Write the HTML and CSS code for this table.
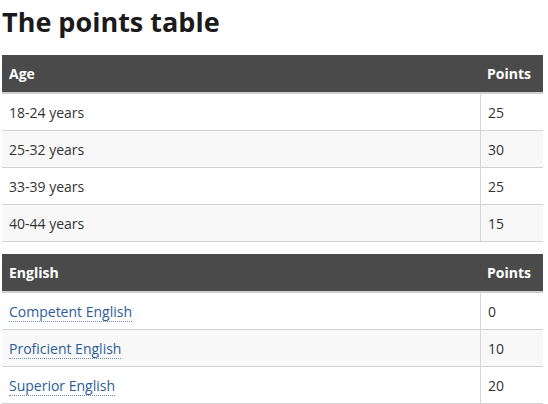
FILE: index.html
```html
<!DOCTYPE html>
<html lang="en">
<head>
<meta charset="utf-8">
<link rel="stylesheet" href="styles.css">
</head>
<body>
<h1 class="title">The points table</h1>
<table class="points">
  <thead>
    <tr><th class="c-label">Age</th><th class="c-pts">Points</th></tr>
  </thead>
  <tbody>
    <tr><td>18-24 years</td><td class="c-pts">25</td></tr>
    <tr><td>25-32 years</td><td class="c-pts">30</td></tr>
    <tr><td>33-39 years</td><td class="c-pts">25</td></tr>
    <tr><td>40-44 years</td><td class="c-pts">15</td></tr>
  </tbody>
</table>
<table class="points">
  <thead>
    <tr><th class="c-label">English</th><th class="c-pts">Points</th></tr>
  </thead>
  <tbody>
    <tr><td><a class="term" href="#">Competent English</a></td><td class="c-pts">0</td></tr>
    <tr><td><a class="term" href="#">Proficient English</a></td><td class="c-pts">10</td></tr>
    <tr><td><a class="term" href="#">Superior English</a></td><td class="c-pts">20</td></tr>
  </tbody>
</table>
</body>
</html>
```
FILE: styles.css
```css
html, body {
  margin: 0;
  background: #ffffff;
}
body {
  padding: 3px 0 0 2px;
  font-family: "Open Sans", "Liberation Sans", sans-serif;
  font-size: 14px;
  color: #333333;
}
.title {
  margin: 0 0 15px 0;
  font-size: 27px;
  font-weight: 700;
  line-height: 37px;
  color: #1b1b1b;
}
.points {
  width: 541px;
  border-collapse: separate;
  border-spacing: 0;
  margin-bottom: 12px;
}
.points th {
  background: #4b4a4a;
  color: #ffffff;
  font-weight: 700;
  text-align: left;
  height: 39px;
  padding: 0 7px;
  border-bottom: 2px solid #cfcfcf;
  box-sizing: border-box;
}
.points td {
  height: 37px;
  padding: 0 7px;
  border-bottom: 1px solid #d2d2d2;
  box-sizing: border-box;
  vertical-align: middle;
}
.points tbody tr:nth-child(even) td {
  background: #f8f8f9;
}
.points td.c-pts {
  border-left: 1px solid #d6d6d6;
}
.c-pts {
  width: 63px;
}
.term {
  color: #2b5d97;
  text-decoration: none;
  border-bottom: 1px dotted #6f8fb3;
}
```
